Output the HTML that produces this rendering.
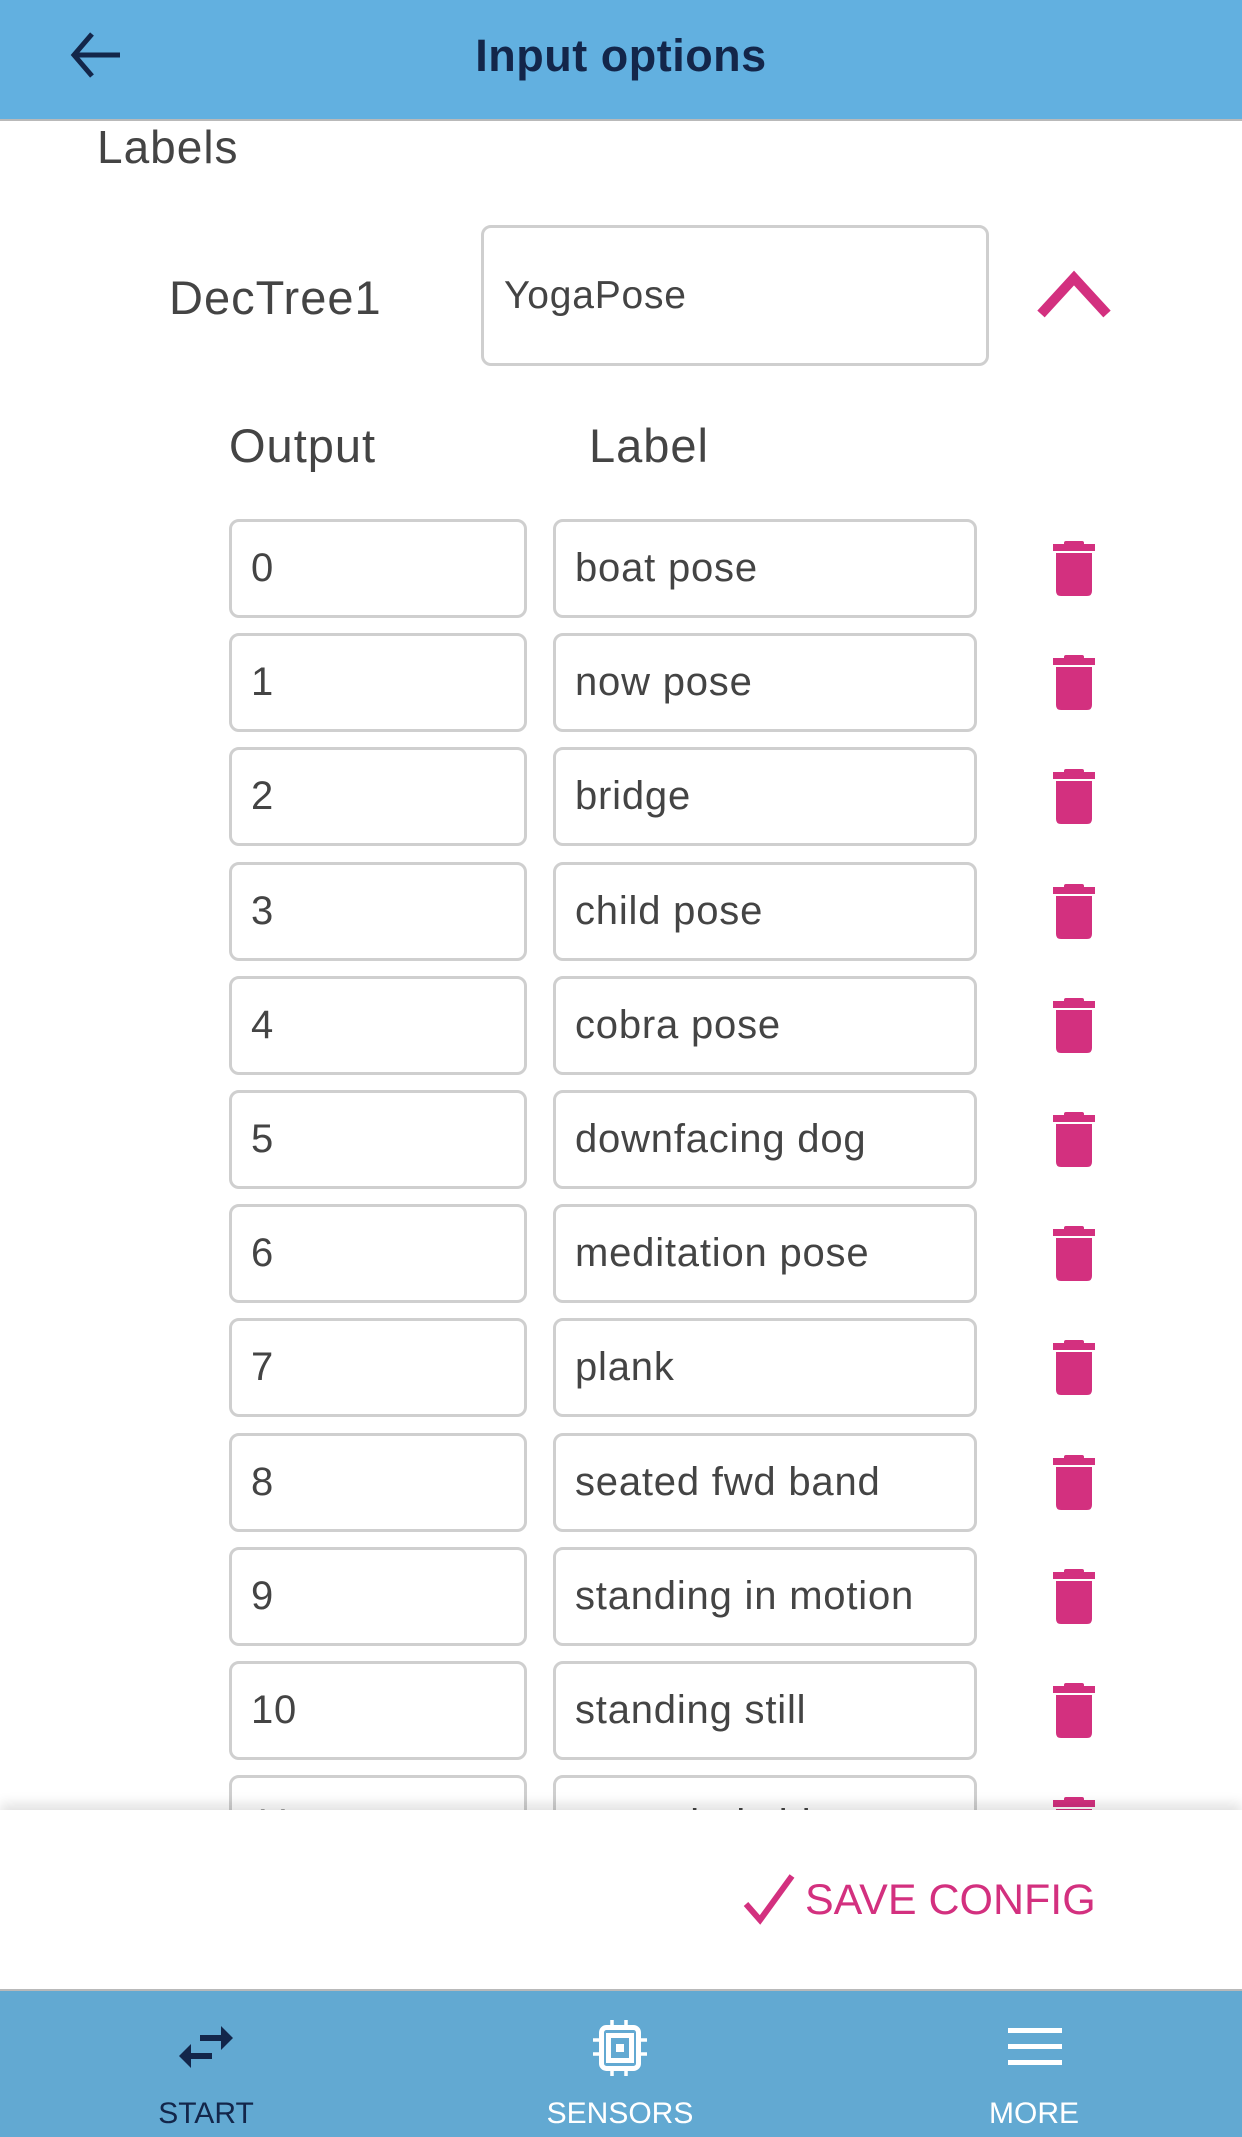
<!DOCTYPE html>
<html><head><meta charset="utf-8"><style>
*{margin:0;padding:0;box-sizing:border-box}
body{width:1242px;height:2137px;position:relative;background:#fff;font-family:"Liberation Sans",sans-serif;overflow:hidden;color:#444}
.hdr{position:absolute;left:0;top:0;width:1242px;height:121px;background:#62b0e0;border-bottom:2px solid #b9b9b9}
.title{position:absolute;left:0;width:1242px;top:30px;text-align:center;font-size:45px;font-weight:bold;color:#13264a;letter-spacing:0.5px}
.t{position:absolute;white-space:nowrap;letter-spacing:1px}
.box{position:absolute;border:3px solid #cfcfcf;border-radius:10px;background:#fff;font-size:40px;letter-spacing:0.8px;color:#444;padding-left:19px;display:flex;align-items:center;white-space:nowrap;overflow:hidden}
.trash{position:absolute}
.panel{position:absolute;left:0;top:1810px;width:1242px;height:180px;background:#fff;box-shadow:0 -6px 12px rgba(0,0,0,0.12)}
.tab{position:absolute;left:0;top:1989px;width:1242px;height:148px;background:#62a9d2;border-top:2px solid #b9b9b9}
.tl{position:absolute;top:2097px;font-size:30px;width:200px;text-align:center}
</style></head><body>
<div class="hdr">
<svg style="position:absolute;left:68px;top:30px" width="56" height="50" viewBox="0 0 56 50"><path d="M24 4 L6 25 L24 46 M6 25 H52" fill="none" stroke="#13264a" stroke-width="5"/></svg>
<div class="title">Input options</div>
</div>
<div class="t" style="left:97px;top:120px;font-size:46px">Labels</div>
<div class="t" style="left:169px;top:270px;font-size:47px">DecTree1</div>
<div class="box" style="left:481px;top:225px;width:508px;height:141px;font-size:39px;padding-left:20px">YogaPose</div>
<svg style="position:absolute;left:1036px;top:270px" width="76" height="50" viewBox="0 0 76 50"><path d="M5 44 L38 8 L71 44" fill="none" stroke="#d3307f" stroke-width="10"/></svg>
<div class="t" style="left:229px;top:418px;font-size:47px">Output</div>
<div class="t" style="left:589px;top:418px;font-size:47px">Label</div>
<div id="rows"></div>
<script>
var labels=["boat pose","now pose","bridge","child pose","cobra pose","downfacing dog","meditation pose","plank","seated fwd band","standing in motion","standing still","extended side"];
var h="";
for(var i=0;i<12;i++){var y=519+i*114.2;
h+='<div class="box" style="left:229px;top:'+y+'px;width:298px;height:99px">'+i+'</div>';
h+='<div class="box" style="left:553px;top:'+y+'px;width:424px;height:99px">'+labels[i]+'</div>';
h+='<svg class="trash" style="left:1052px;top:'+(y+22)+'px" width="44" height="56" viewBox="0 0 44 56"><rect x="12" y="0" width="20" height="5" rx="2" fill="#d3307f"/><rect x="1" y="3" width="42" height="7" fill="#d3307f"/><path d="M4 12 H40 V50 Q40 55 35 55 H9 Q4 55 4 50 Z" fill="#d3307f"/></svg>';}
document.getElementById("rows").innerHTML=h;
</script>
<div class="panel">
<svg style="position:absolute;left:742px;top:60px" width="54" height="56" viewBox="0 0 54 56"><path d="M4 34 L18 50 L50 6" fill="none" stroke="#d3307f" stroke-width="6"/></svg>
<div class="t" style="left:805px;top:66px;font-size:43px;color:#d3307f;letter-spacing:0">SAVE CONFIG</div>
</div>
<div class="tab"></div>
<svg style="position:absolute;left:176px;top:2024px" width="60" height="48" viewBox="0 0 60 48"><path d="M24 11 H46 V17 H24 Z M45 2 L57 14 L45 26 Z" fill="#13264a"/><path d="M36 29 H14 V35 H36 Z M15 20 L3 32 L15 44 Z" fill="#13264a"/></svg>
<svg style="position:absolute;left:590px;top:2018px" width="60" height="60" viewBox="0 0 60 60"><rect x="11.5" y="9.5" width="37" height="41" rx="5" fill="none" stroke="#fff" stroke-width="5"/><rect x="18.5" y="17.5" width="23" height="25" fill="none" stroke="#fff" stroke-width="5"/><rect x="26" y="26" width="8" height="8" fill="#fff"/><path d="M22 2V9M36 2V9M22 51V58M36 51V58M3 22H10M3 36H10M50 22H57M50 36H57" stroke="#fff" stroke-width="3.5"/></svg>
<svg style="position:absolute;left:1008px;top:2028px" width="54" height="38" viewBox="0 0 54 38"><rect y="0" width="54" height="5" fill="#fff"/><rect y="16" width="54" height="5" fill="#fff"/><rect y="32" width="54" height="5" fill="#fff"/></svg>
<div class="tl" style="left:106px;color:#13264a">START</div>
<div class="tl" style="left:520px;color:#fff">SENSORS</div>
<div class="tl" style="left:934px;color:#fff">MORE</div>
</body></html>
